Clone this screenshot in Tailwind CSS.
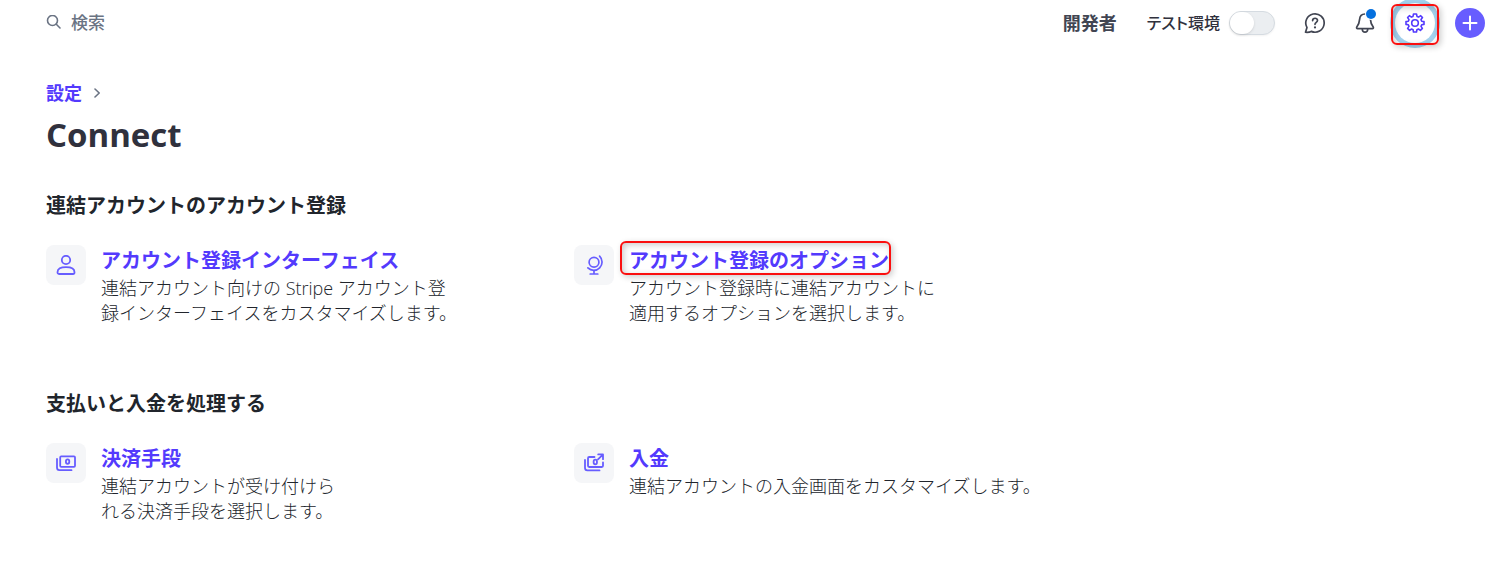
<!DOCTYPE html>
<html lang="ja">
<head>
    <meta charset="UTF-8">
    <meta name="viewport" content="width=device-width, initial-scale=1.0">
    <title>Connect - 設定</title>
    <script src="https://cdn.jsdelivr.net/npm/@tailwindcss/browser@4"></script>
</head>
<body class="bg-white text-[#21252c] font-['Open_Sans','Noto_Sans_CJK_JP',sans-serif]">
    <header class="flex items-center justify-between pl-[46px] pr-[11px] h-[46px]">
        <label class="flex items-center gap-[9px] text-[#6a7383]">
            <svg class="w-4 h-4" viewBox="0 0 16 16" fill="none" stroke="currentColor" stroke-width="1.6" stroke-linecap="round">
                <circle cx="6.5" cy="5.5" r="5" />
                <path d="M10.3 9.3L14 13" />
            </svg>
            <input type="search" placeholder="検索" class="w-60 text-[17px] leading-6 font-medium outline-none placeholder:text-[#6a7383] placeholder:opacity-100">
        </label>

        <div class="flex items-center">
            <a href="#" class="text-[18px] leading-6 font-bold text-[#414552] mr-[30px]">開発者</a>
            <label class="flex items-center gap-[9px] text-[16px] leading-6 font-medium text-[#30313d] mr-[29px]">
                <span class="[font-feature-settings:'palt']">テスト環境</span>
                <input type="checkbox" class="peer sr-only">
                <span class="flex w-[46px] h-6 rounded-full bg-[#ebeef1] border border-[#d5dbe1] shadow-xs peer-checked:justify-end">
                    <span class="w-6 h-full rounded-full bg-white shadow-sm"></span>
                </span>
            </label>
            <button aria-label="ヘルプ" class="mr-[28px] text-[#414552]">
                <svg class="w-[22px] h-[22px]" viewBox="0 0 22 22" fill="none" stroke="currentColor" stroke-width="1.7" stroke-linecap="round" stroke-linejoin="round">
                    <path d="M1.5 20.2L3 15.6A9.2 9.2 0 1 1 7.2 19.4C5.5 20.3 3.5 20.4 1.5 20.2Z" />
                    <path d="M8.6 8.6C8.7 5.4 13.6 5.5 13.5 8.5C13.4 10.2 11 10.5 11 12.3" />
                    <circle cx="11" cy="15.4" r="1.1" fill="currentColor" stroke="none" />
                </svg>
            </button>
            <button aria-label="通知" class="relative mr-[19px] text-[#414552]">
                <svg class="w-[22px] h-[22px]" viewBox="0 0 22 22" fill="none" stroke="currentColor" stroke-width="1.7" stroke-linecap="round" stroke-linejoin="round">
                    <path d="M11 2C7.6 2 5.8 4.4 5.6 7.4C5.4 11.4 4.6 12.6 2.8 15C2.3 15.9 2.7 16.7 3.6 16.7H18.4C19.3 16.7 19.7 15.9 19.2 15C17.4 12.6 16.6 11.4 16.4 7.4C16.2 4.4 14.4 2 11 2Z" />
                    <path d="M8.3 17.2C8.5 21.2 13.5 21.2 13.7 17.2" />
                </svg>
                <span class="absolute -top-[3px] right-0 w-[10px] h-[10px] rounded-full bg-[#0570de] ring-1 ring-white"></span>
            </button>
            <div class="relative mr-5">
                <button aria-label="設定" class="flex items-center justify-center w-10 h-10 rounded-full ring-5 ring-[#a4d2ee] text-[#533afd]">
                    <svg class="w-5 h-5" viewBox="0 0 20 20" fill="none" stroke="currentColor" stroke-width="1.6" stroke-linejoin="round">
                        <path d="M8.5 1H11.5L12 3.4L13.6 4.1L15.7 2.7L17.5 4.6L16 6.6L16.7 8.2L19 8.6V11.4L16.7 11.8L16 13.4L17.4 15.4L15.4 17.4L13.4 16L11.9 16.7L11.5 19H8.5L8.1 16.7L6.6 16L4.6 17.4L2.6 15.4L4 13.4L3.3 11.8L1 11.4V8.6L3.3 8.2L4 6.6L2.6 4.6L4.4 2.7L6.4 4.1L8 3.4Z" />
                        <circle cx="10" cy="10" r="3.3" />
                    </svg>
                </button>
                <span class="absolute -inset-x-1 top-px -bottom-[2px] border-2 border-[#fa0f0f] rounded-md shadow-[2px_2px_6px_rgba(0,0,0,0.2),inset_2px_2px_6px_rgba(0,0,0,0.2)] pointer-events-none"></span>
            </div>
            <button aria-label="作成" class="flex items-center justify-center w-[30px] h-[30px] rounded-full bg-[#675dff] text-white">
                <svg class="w-4 h-4" viewBox="0 0 16 16" fill="none" stroke="currentColor" stroke-width="2" stroke-linecap="round">
                    <path d="M8 1.5V14.5M1.5 8H14.5" />
                </svg>
            </button>
        </div>
    </header>

    <main class="px-[46px] pt-[35px] pb-12">
        <nav class="flex items-center gap-[10px] text-[18px] leading-6">
            <a href="#" class="font-bold text-[#533afd]">設定</a>
            <svg class="w-[10px] h-[10px] text-[#6a7383]" viewBox="0 0 10 10" fill="none" stroke="currentColor" stroke-width="1.6" stroke-linecap="round" stroke-linejoin="round">
                <path d="M3 1L7.2 5L3 9" />
            </svg>
        </nav>
        <h1 class="mt-2 text-[33px] leading-[44px] font-bold text-[#30313d]">Connect</h1>

        <section class="mt-[35px]">
            <h2 class="text-[20px] leading-7 font-bold">連結アカウントのアカウント登録</h2>
            <div class="mt-[25px] grid grid-cols-2 max-w-[1056px]">
                <div class="flex gap-[15px]">
                    <div class="flex items-center justify-center shrink-0 w-10 h-10 rounded-lg bg-[#f5f6f8] text-[#675dff]">
                        <svg class="w-5 h-5" viewBox="0 0 20 20" fill="none" stroke="currentColor" stroke-width="1.8" stroke-linejoin="round">
                            <circle cx="10" cy="5" r="4.2" />
                            <path d="M1.5 17.2C1.5 13.6 4.6 12.2 10 12.2S18.5 13.6 18.5 17.2C18.5 18.3 18 19 17 19H3C2 19 1.5 18.3 1.5 17.2Z" />
                        </svg>
                    </div>
                    <div class="pt-px">
                        <a href="#" class="block w-fit text-[20px] leading-[30px] font-bold text-[#533afd]">アカウント登録インターフェイス</a>
                        <p class="text-[18px] leading-[25px] font-light">連結アカウント向けの Stripe アカウント登<br>録インターフェイスをカスタマイズします。</p>
                    </div>
                </div>
                <div class="flex gap-[15px]">
                    <div class="flex items-center justify-center shrink-0 w-10 h-10 rounded-lg bg-[#f5f6f8] text-[#675dff]">
                        <svg class="w-5 h-5" viewBox="0 0 20 20" fill="none" stroke="currentColor" stroke-width="1.7" stroke-linecap="round">
                            <circle cx="10" cy="7.2" r="4.9" />
                            <path d="M15.6 1.1A8.3 8.3 0 0 1 3.9 12.9" />
                            <path d="M10 15.6V19M6.2 19H13.8" />
                        </svg>
                    </div>
                    <div class="pt-px">
                        <a href="#" class="relative block w-fit text-[20px] leading-[30px] font-bold text-[#533afd]">アカウント登録のオプション
                            <span class="absolute -left-[9px] -right-[2px] -top-[5px] h-[34px] border-2 border-[#fa0f0f] rounded-md shadow-[2px_2px_6px_rgba(0,0,0,0.2),inset_2px_2px_6px_rgba(0,0,0,0.2)] pointer-events-none"></span>
                        </a>
                        <p class="text-[18px] leading-[25px] font-light">アカウント登録時に連結アカウントに<br>適用するオプションを選択します。</p>
                    </div>
                </div>
            </div>
        </section>

        <section class="mt-[64px]">
            <h2 class="text-[20px] leading-7 font-bold">支払いと入金を処理する</h2>
            <div class="mt-[25px] grid grid-cols-2 max-w-[1056px]">
                <div class="flex gap-[15px]">
                    <div class="flex items-center justify-center shrink-0 w-10 h-10 rounded-lg bg-[#f5f6f8] text-[#675dff]">
                        <svg class="w-5 h-5" viewBox="0 0 20 20" fill="none" stroke="currentColor" stroke-width="1.8" stroke-linecap="round" stroke-linejoin="round">
                            <rect x="4.2" y="3.4" width="14.8" height="10.4" rx="1" />
                            <ellipse cx="11.6" cy="8.6" rx="1.7" ry="2.3" />
                            <path d="M1 6V14.5C1 16.2 1.8 17.2 3.4 17.2H15.5" />
                        </svg>
                    </div>
                    <div class="pt-px">
                        <a href="#" class="block w-fit text-[20px] leading-[30px] font-bold text-[#533afd]">決済手段</a>
                        <p class="text-[18px] leading-[25px] font-light">連結アカウントが受け付けら<br>れる決済手段を選択します。</p>
                    </div>
                </div>
                <div class="flex gap-[15px]">
                    <div class="flex items-center justify-center shrink-0 w-10 h-10 rounded-lg bg-[#f5f6f8] text-[#675dff]">
                        <svg class="w-5 h-5" viewBox="0 0 20 20" fill="none" stroke="currentColor" stroke-width="1.8" stroke-linecap="round" stroke-linejoin="round">
                            <path d="M10.5 4H5.2C4.4 4 4 4.4 4 5.2V12.8C4 13.6 4.4 14 5.2 14H17.8C18.6 14 19 13.6 19 12.8V9.5" />
                            <ellipse cx="11.3" cy="9" rx="1.7" ry="2.3" />
                            <path d="M1 7V14.8C1 16.4 1.8 17.4 3.4 17.4H15.5" />
                            <path d="M14.2 1.4H19V6.2M18.8 1.6L14 6.4" />
                        </svg>
                    </div>
                    <div class="pt-px">
                        <a href="#" class="block w-fit text-[20px] leading-[30px] font-bold text-[#533afd]">入金</a>
                        <p class="text-[18px] leading-[25px] font-light">連結アカウントの入金画面をカスタマイズします。</p>
                    </div>
                </div>
            </div>
        </section>
    </main>
</body>
</html>
